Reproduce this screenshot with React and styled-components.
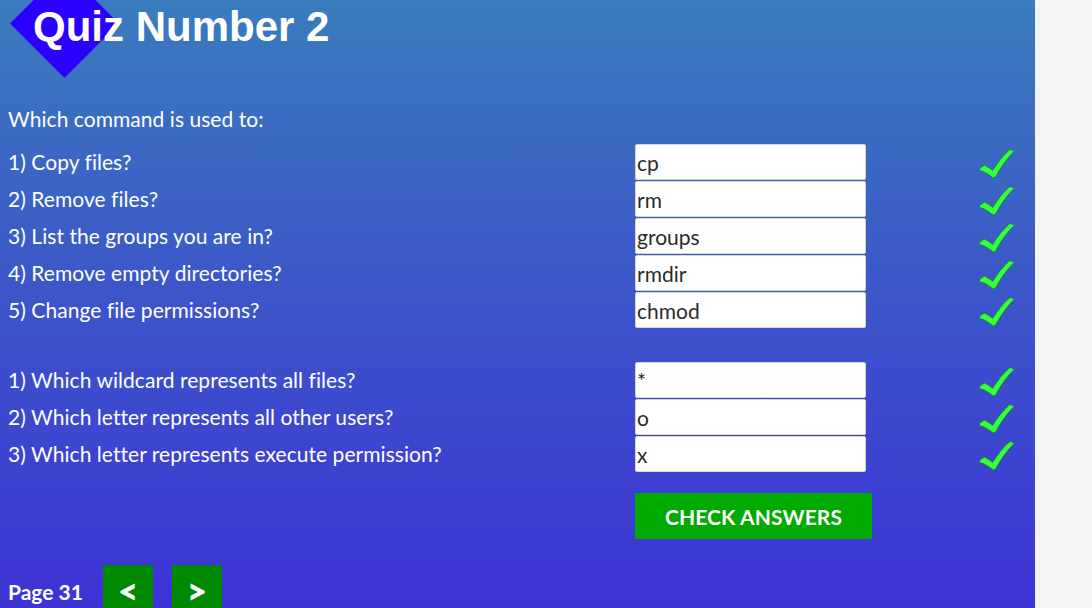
import React from "react";
import styled, { createGlobalStyle } from "styled-components";

const Global = createGlobalStyle`
  html, body { margin: 0; padding: 0; overflow: hidden; background: #f4f4f4; }
  * { box-sizing: border-box; }
`;

const Page = styled.div`
  width: 1035px;
  height: 608px;
  overflow: hidden;
  background: linear-gradient(180deg, #3a7cbd 0%, #3c58c8 45%, #3d33d6 100%);
  padding-left: 8px;
  font-family: Lato, "Noto Sans", sans-serif;
  color: #fff;
`;

const Header = styled.header`
  position: relative;
  height: 96px;
`;

const Diamond = styled.div`
  position: absolute;
  left: 17.5px;
  top: -15.5px;
  width: 77px;
  height: 77px;
  background: #2b00fe;
  transform: rotate(45deg);
`;

const Title = styled.h1`
  position: relative;
  margin: 0 0 0 25px;
  padding-top: 1px;
  font-family: "Liberation Sans", Arial, sans-serif;
  font-weight: 700;
  font-size: 42px;
  line-height: 52px;
  color: #fff;
`;

const Intro = styled.p`
  margin: 10px 0 0;
  font-size: 21px;
  line-height: 26px;
  letter-spacing: 0.05px;
`;

const Group = styled.div`
  display: grid;
  grid-template-columns: 627px 231px 112px 37px;
  grid-auto-rows: 37px;
  margin-top: ${(p) => p.$top}px;
`;

const Label = styled.div`
  font-size: 21px;
  line-height: 26px;
  letter-spacing: 0.05px;
  align-self: center;
  padding-bottom: 2px;
`;

const Answer = styled.input`
  width: 231px;
  height: 36px;
  border: 1px solid #d5d5d5;
  border-radius: 2px;
  background: #fff;
  padding: 0 0 0 1px;
  font-family: Lato, "Noto Sans", sans-serif;
  font-size: 21px;
  color: #2b2b2b;
  outline: none;
`;

const CheckCell = styled.div`
  grid-column: 4;
  display: flex;
  align-items: center;
  padding-top: 1px;
`;

const Spacer = styled.div``;

const ActionRow = styled.div`
  display: flex;
  margin-top: 20px;
  padding-left: 627px;
`;

const CheckButton = styled.button`
  width: 237px;
  height: 46px;
  border: none;
  border-radius: 2px;
  background: #00aa00;
  color: #fff;
  font-family: Lato, "Noto Sans", sans-serif;
  font-weight: 700;
  font-size: 21px;
  letter-spacing: 0.1px;
  text-transform: uppercase;
  cursor: pointer;
`;

const Footer = styled.div`
  display: flex;
  align-items: flex-start;
  margin-top: 26px;
`;

const PageLabel = styled.div`
  font-weight: 700;
  font-size: 21px;
  line-height: 26px;
  margin-top: 14px;
  width: 95px;
`;

const NavButton = styled.button`
  width: 50px;
  height: 54px;
  margin-right: ${(p) => p.$gap || 0}px;
  border: none;
  border-radius: 2px;
  background: #008a00;
  color: #fff;
  font-family: Lato, "Noto Sans", sans-serif;
  font-weight: 700;
  font-size: 33px;
  line-height: 1;
  padding: 0 0 3px;
  cursor: pointer;
  -webkit-text-stroke: 1px #fff;
`;

const Tick = () => (
  <svg width="37" height="31" viewBox="0 0 37 31">
    <path
      d="M1.5 21 C3 19.2 4.5 18 6.5 17 C9.5 18.5 12.5 20.5 14.8 22.3 C19.5 14.5 25 7.5 31.5 1.8 C33.3 1.6 35.2 2.3 36 3.6 C29.5 10 23 19 18 28.3 C17.2 29.8 15.4 30.2 14.5 29.5 C10.5 26.5 6.5 23.5 1.5 22.5 Z"
      fill="#33ff3a"
      stroke="#1f7a3a"
      strokeWidth="0.9"
      strokeLinejoin="round"
    />
  </svg>
);

const firstSet = [
  ["1) Copy files?", "cp"],
  ["2) Remove files?", "rm"],
  ["3) List the groups you are in?", "groups"],
  ["4) Remove empty directories?", "rmdir"],
  ["5) Change file permissions?", "chmod"],
];

const secondSet = [
  ["1) Which wildcard represents all files?", "*"],
  ["2) Which letter represents all other users?", "o"],
  ["3) Which letter represents execute permission?", "x"],
];

const Rows = ({ items }) =>
  items.map(([q, a]) => (
    <React.Fragment key={q}>
      <Label>{q}</Label>
      <Answer defaultValue={a} />
      <Spacer />
      <CheckCell>
        <Tick />
      </CheckCell>
    </React.Fragment>
  ));

export default function App() {
  return (
    <>
      <Global />
      <Page>
        <Header>
          <Diamond />
          <Title>Quiz Number 2</Title>
        </Header>
        <Intro>Which command is used to:</Intro>
        <Group $top={12}>
          <Rows items={firstSet} />
        </Group>
        <Group $top={33}>
          <Rows items={secondSet} />
        </Group>
        <ActionRow>
          <CheckButton>Check Answers</CheckButton>
        </ActionRow>
        <Footer>
          <PageLabel>Page 31</PageLabel>
          <NavButton $gap={19}>&lt;</NavButton>
          <NavButton>&gt;</NavButton>
        </Footer>
      </Page>
    </>
  );
}
